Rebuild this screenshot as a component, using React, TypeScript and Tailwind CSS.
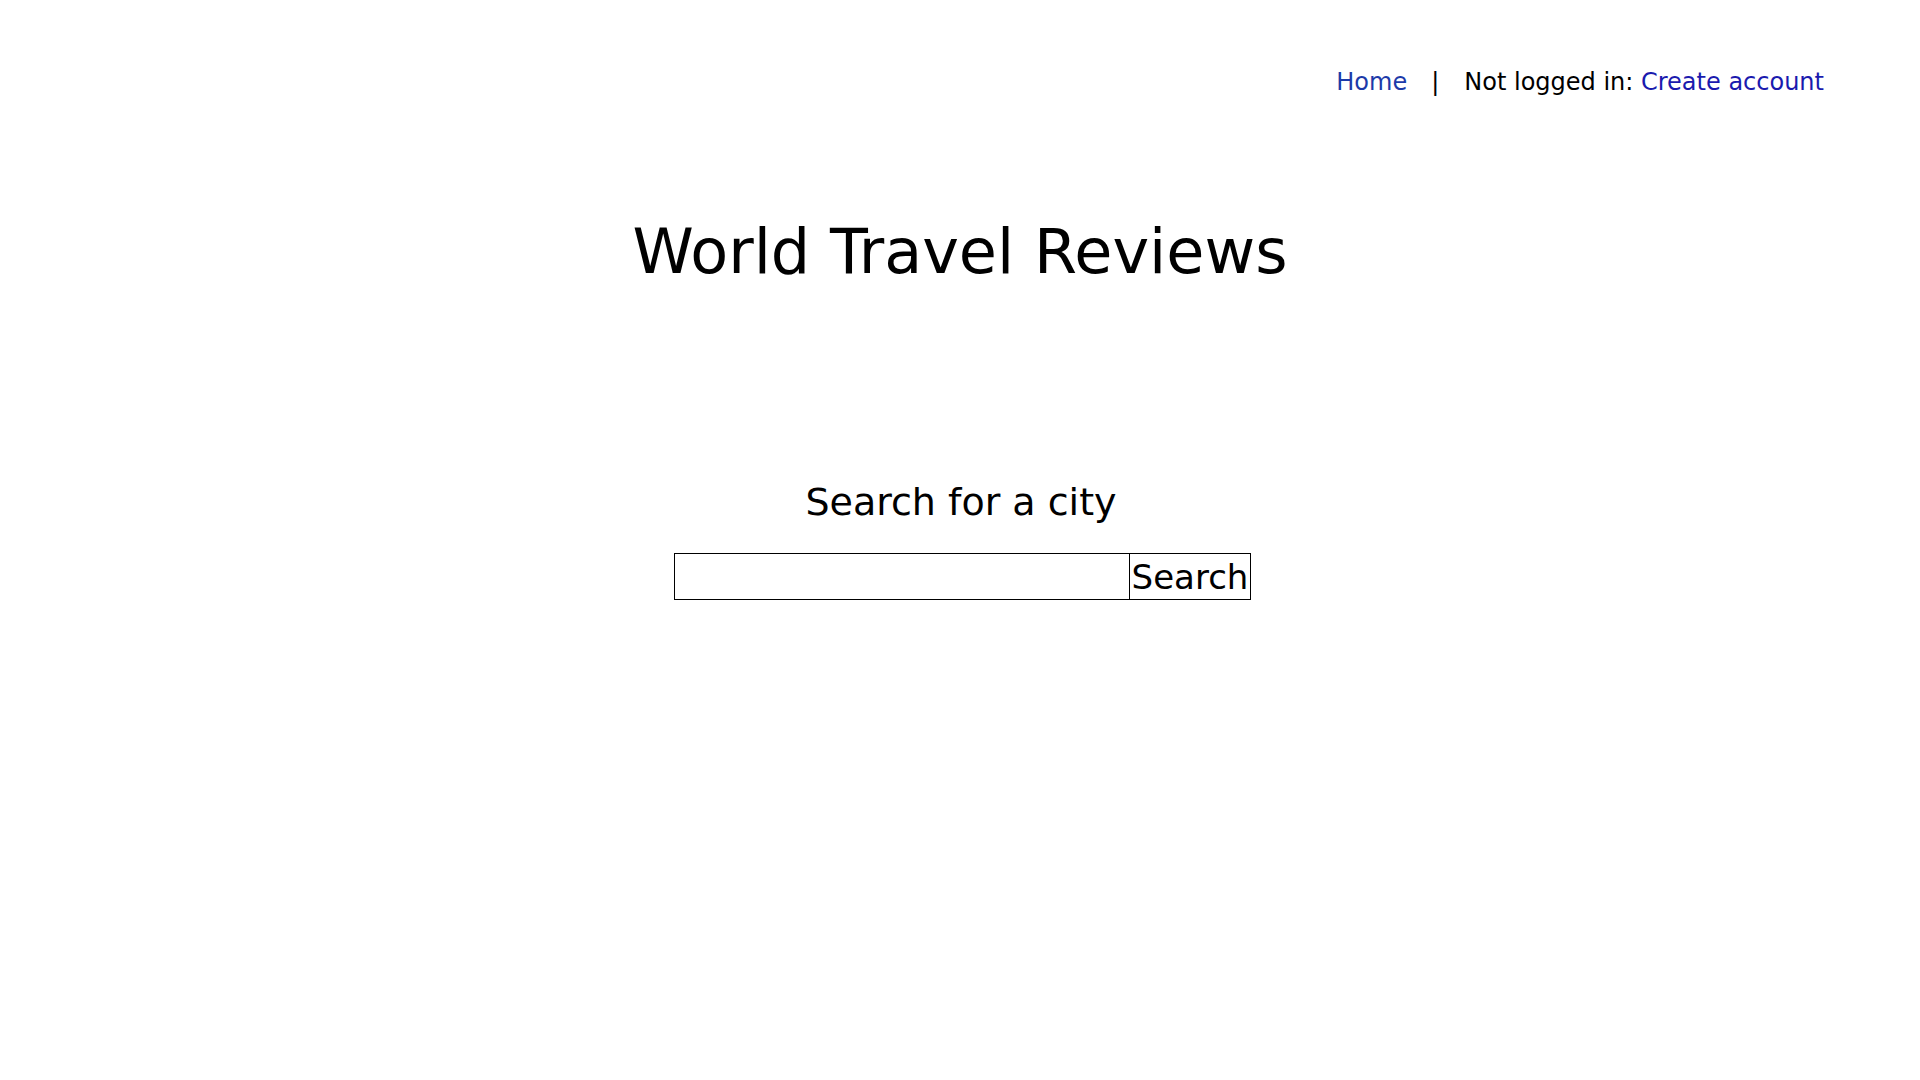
export default function App() {
  return (
    <div className="min-h-screen bg-white text-black" style={{ fontFamily: '"DejaVu Sans", sans-serif' }}>
      {/* Top nav */}
      <nav className="flex justify-end items-center pt-[66px] pr-[96px] text-[24px] leading-[32px]">
        <a href="#" className="text-[#1c3aa9]">Home</a>
        <span className="ml-[24px] mr-[25px]">|</span>
        <span>Not logged in:&nbsp;</span>
        <a href="#" className="text-[#1a1aae]">Create account</a>
      </nav>

      <h1 className="text-center text-[62px] leading-[72px] mt-[118px]">World Travel Reviews</h1>

      <div className="flex flex-col items-center mt-[190px] pl-[2px]">
        <h2 className="text-[38px] leading-[48px]">Search for a city</h2>
        <form className="flex mt-[27px] pl-[3px]" onSubmit={(e) => e.preventDefault()}>
          <input type="text" className="w-[456px] h-[47px] border border-black outline-none px-1 text-[24px]" />
          <button type="submit" className="h-[47px] w-[121px] border border-l-0 border-black text-[34px] leading-none px-[1px]">Search</button>
        </form>
      </div>
    </div>
  )
}
